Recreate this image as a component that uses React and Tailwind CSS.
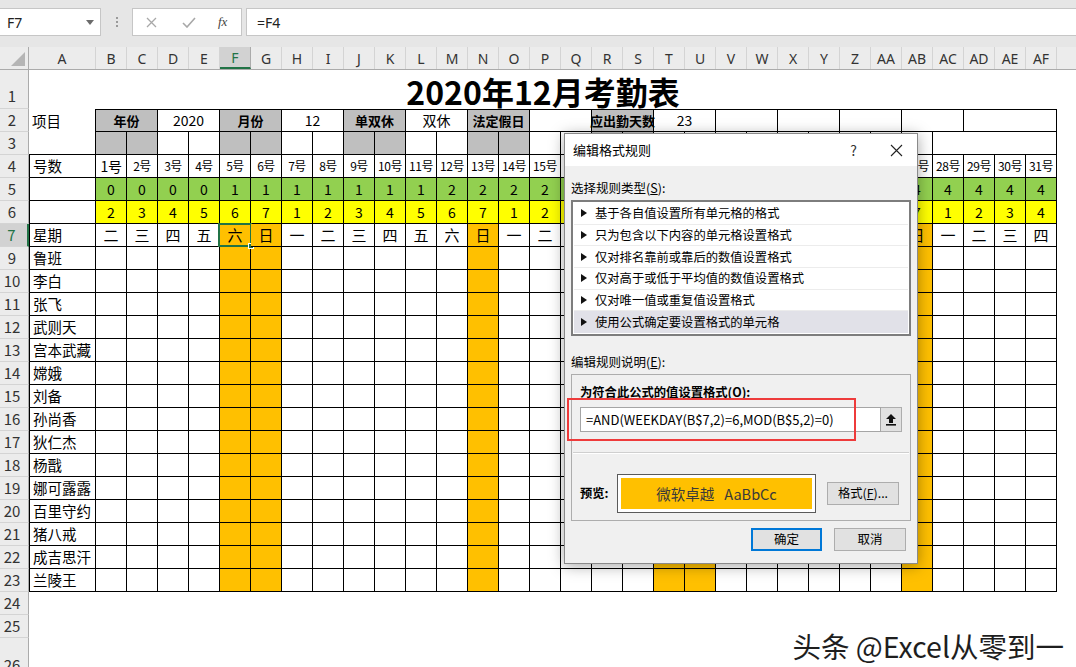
import React from 'react';

const LETTERS = [
  ...'ABCDEFGHIJKLMNOPQRSTUVWXYZ'.split(''),
  'AA', 'AB', 'AC', 'AD', 'AE', 'AF',
];
const days = Array.from({ length: 31 }, (_, i) => i + 1);
const week = (d) => Math.floor((d + 2) / 7);
const weekday = (d) => (d % 7) + 1;
const CN = '一二三四五六日';
const ORANGE = new Set([5, 6, 13, 19, 20, 27]);
const NAMES = ['鲁班', '李白', '张飞', '武则天', '宫本武藏', '嫦娥', '刘备', '孙尚香', '狄仁杰', '杨戬', '娜可露露', '百里守约', '猪八戒', '成吉思汗', '兰陵王'];

// row 2 merged header blocks (B..AF)
const ROW2 = [
  { t: '年份', g: true }, { t: '2020' }, { t: '月份', g: true }, { t: '12' },
  { t: '单双休', g: true }, { t: '双休' }, { t: '法定假日', g: true }, { t: '' },
  { t: '应出勤天数', g: true }, { t: '23' }, { t: '' }, { t: '' }, { t: '' }, { t: '' },
  { t: '', wide: true },
];
const GRAY3 = new Set([1, 2, 5, 6, 9, 10, 13, 14, 17, 18]);

function RowHead({ n, sel, align }) {
  return (
    <div
      className={`w-[29px] shrink-0 flex justify-center pr-[4px] text-[15px] border-b border-b-[#d4d4d4] ${align === 'end' ? 'items-end pb-[1px]' : 'items-center'} ${
        sel
          ? 'bg-[#d2d2d2] text-[#217346] border-r-2 border-r-[#217346]'
          : 'bg-[#ececec] text-[#333] border-r border-r-[#ababab]'
      }`}
    >
      {n}
    </div>
  );
}

const cellBase = 'shrink-0 flex items-center justify-center border-r border-b border-black';

function DayRow({ n, render, aCell }) {
  return (
    <div className="flex h-[23px]">
      <RowHead n={n} sel={n === 7} />
      {aCell}
      {days.map((d) => render(d))}
      <div className="flex-1" />
    </div>
  );
}

function ACell({ text, left = true, bottom = true }) {
  return (
    <div
      className={`w-[67px] shrink-0 flex items-center pl-[3px] text-[14.5px] border-r border-black ${bottom ? 'border-b' : ''} ${left ? 'border-l' : ''}`}
    >
      {text}
    </div>
  );
}

function Tri() {
  return (
    <svg width="6" height="8" viewBox="0 0 6 8" className="shrink-0">
      <path d="M0 0 L6 4 L0 8 Z" fill="#111" />
    </svg>
  );
}

const RULES = [
  '基于各自值设置所有单元格的格式',
  '只为包含以下内容的单元格设置格式',
  '仅对排名靠前或靠后的数值设置格式',
  '仅对高于或低于平均值的数值设置格式',
  '仅对唯一值或重复值设置格式',
  '使用公式确定要设置格式的单元格',
];

function Dialog() {
  return (
    <div className="absolute left-[564px] top-[133px] w-[354px] h-[431px] bg-[#f0f0f0] border border-[#8a8a8a] shadow-[0_2px_14px_rgba(0,0,0,0.35)] text-[12px] text-black">
      <div className="h-[32px] bg-white flex items-center justify-between pl-[8px] pr-[14px]">
        <span className="text-[13px]">编辑格式规则</span>
        <div className="flex items-center gap-[33px]">
          <span className="text-[14px] text-[#333]">?</span>
          <svg width="13" height="13" viewBox="0 0 13 13">
            <path d="M1 1 L12 12 M12 1 L1 12" stroke="#222" strokeWidth="1.1" />
          </svg>
        </div>
      </div>
      <div className="px-[6px]">
        <div className="pt-[13px] leading-[18px] text-[12.5px]">
          选择规则类型(<span className="underline">S</span>):
        </div>
        <div className="mt-[3px] border-2 border-[#7d7d7d] bg-white p-[1px]">
          {RULES.map((r, i) => (
            <div
              key={r}
              className={`h-[21.7px] flex items-center gap-[8px] pl-[7px] text-[12.3px] border-b ${
                i === 5 ? 'bg-[#e1e1e8] border-b-[#e1e1e8]' : 'border-b-[#ececec]'
              }`}
            >
              <Tri />
              <span>{r}</span>
            </div>
          ))}
        </div>
        <div className="mt-[17px] leading-[18px] text-[12.5px]">
          编辑规则说明(<span className="underline">E</span>):
        </div>
        <div className="mt-[3px] h-[147px] border border-[#adadad] pl-[8px] pr-[1px]">
          <div className="pt-[8px] leading-[18px] font-bold text-[12.3px]">
            为符合此公式的值设置格式(<span className="underline">O</span>):
          </div>
          <div className="mt-[6px] flex h-[25px]">
            <div className="w-[301px] bg-white border border-[#a5a5a5] flex items-center pl-[5px] text-[13px]">
              =AND(WEEKDAY(B$7,2)=6,MOD(B$5,2)=0)
            </div>
            <div className="w-[21px] bg-[#e1e1e1] border border-[#adadad] border-l-0 flex items-center justify-center">
              <svg width="12" height="13" viewBox="0 0 12 13">
                <path d="M6 1 L11 6 H8 V10 H4 V6 H1 Z" fill="#111" />
                <rect x="1" y="11" width="10" height="1.6" fill="#111" />
              </svg>
            </div>
          </div>
          <div className="mt-[20px] -ml-[7px] border-t border-t-[#cfcfcf] border-b border-b-white" />
          <div className="mt-[20px] flex items-center">
            <span className="w-[37px] font-bold text-[12.3px]">预览:</span>
            <div className="w-[199px] h-[39px] border border-[#5a5a5a] bg-white p-[3px]">
              <div className="h-full bg-[#ffc000] flex items-center justify-center text-[14.5px] text-[#3a3a3a] gap-[10px]">
                <span>微软卓越</span>
                <span>AaBbCc</span>
              </div>
            </div>
            <div className="ml-[11px] w-[72px] h-[23px] bg-[#e1e1e1] border border-[#adadad] flex items-center justify-center text-[12.3px]">
              格式(<span className="underline">F</span>)...
            </div>
          </div>
        </div>
        <div className="mt-[7px] flex justify-end gap-[12px] mr-[5px]">
          <div className="w-[71px] h-[23px] bg-[#e1e1e1] border-2 border-[#0078d7] flex items-center justify-center text-[12.5px]">
            确定
          </div>
          <div className="w-[72px] h-[23px] bg-[#e1e1e1] border border-[#adadad] flex items-center justify-center text-[12.5px]">
            取消
          </div>
        </div>
      </div>
      {/* red highlight around formula */}
      <div className="absolute left-[2px] top-[264px] w-[289px] h-[43px] border-2 border-[#ee3b3b]" />
    </div>
  );
}

export default function App() {
  return (
    <div className="relative w-[1076px] h-[667px] overflow-hidden bg-white font-['Noto_Sans_CJK_SC','Noto_Sans',sans-serif] text-black">
      {/* formula bar */}
      <div className="h-[47px] bg-[#e6e6e6] flex items-start pt-[8px]">
        <div className="w-[101px] h-[28px] bg-white border border-[#c6c6c6] border-l-0 flex items-center justify-between pl-[7px] pr-[6px]">
          <span className="text-[14px] text-[#222] font-['Noto_Sans',sans-serif]">F7</span>
          <svg width="8" height="5" viewBox="0 0 8 5">
            <path d="M0 0 H8 L4 5 Z" fill="#6b6b6b" />
          </svg>
        </div>
        <div className="w-[31px] h-[28px] flex flex-col items-center justify-center gap-[2px]">
          <span className="w-[2px] h-[2px] bg-[#9a9a9a]" />
          <span className="w-[2px] h-[2px] bg-[#9a9a9a]" />
          <span className="w-[2px] h-[2px] bg-[#9a9a9a]" />
        </div>
        <div className="w-[110px] h-[28px] bg-white border border-[#c6c6c6] flex items-center pl-[13px]">
          <svg width="11" height="11" viewBox="0 0 11 11">
            <path d="M1 1 L10 10 M10 1 L1 10" stroke="#a8a8a8" strokeWidth="1.3" />
          </svg>
          <svg width="14" height="11" viewBox="0 0 14 11" className="ml-[25px]">
            <path d="M1 6 L5 10 L13 1" stroke="#a8a8a8" strokeWidth="1.6" fill="none" />
          </svg>
          <span className="ml-[22px] text-[13px] italic font-['Liberation_Serif',serif] text-[#444]">fx</span>
        </div>
        <div className="ml-[4px] flex-1 h-[28px] bg-white border border-[#c6c6c6] border-r-0 flex items-center pl-[10px]">
          <span className="text-[14px] text-[#222] font-['Noto_Sans',sans-serif]">=F4</span>
        </div>
      </div>

      {/* column headers */}
      <div className="flex h-[23px] bg-[#ececec] border-b border-b-[#ababab] font-['Noto_Sans',sans-serif] text-[14px] text-[#333]">
        <div className="w-[29px] shrink-0 border-r border-r-[#ababab] relative">
          <svg width="14" height="14" viewBox="0 0 14 14" className="absolute right-[3px] bottom-[3px]">
            <path d="M14 0 V14 H0 Z" fill="#b5b5b5" />
          </svg>
        </div>
        {LETTERS.map((l) => (
          <div
            key={l}
            className={`${l === 'A' ? 'w-[67px]' : 'w-[31px]'} shrink-0 flex items-center justify-center ${
              l === 'F'
                ? 'bg-[#d2d2d2] text-[#217346] border-b-2 border-b-[#217346] border-r border-r-[#ababab]'
                : 'border-r border-r-[#d4d4d4]'
            }`}
          >
            {l}
          </div>
        ))}
        <div className="flex-1" />
      </div>

      {/* row 1 title */}
      <div className="flex h-[39px]">
        <RowHead n={1} align="end" />
        <div className="w-[1028px] shrink-0 flex items-end justify-center pb-[2px] text-[32px] font-bold leading-none">
          2020年12月考勤表
        </div>
        <div className="flex-1" />
      </div>

      {/* row 2 */}
      <div className="flex h-[23px]">
        <RowHead n={2} />
        <ACell text="项目" left={false} bottom={false} />
        {ROW2.map((c, i) => (
          <div
            key={i}
            className={`${c.wide ? 'w-[93px]' : 'w-[62px]'} ${cellBase} border-t whitespace-nowrap ${c.g ? 'bg-[#bfbfbf] font-bold text-[13px]' : 'text-[14px]'}`}
          >
            {c.t}
          </div>
        ))}
        <div className="flex-1" />
      </div>

      {/* row 3 */}
      <div className="flex h-[23px]">
        <RowHead n={3} />
        <ACell text="" left={false} />
        {days.slice(0, 27).map((d) => (
          <div key={d} className={`w-[31px] ${cellBase} ${GRAY3.has(d) ? 'bg-[#bfbfbf]' : ''}`} />
        ))}
        <div className={`w-[124px] ${cellBase}`} />
        <div className="flex-1" />
      </div>

      {/* row 4 */}
      <DayRow
        n={4}
        aCell={<ACell text="号数" />}
        render={(d) => (
          <div key={d} className={`w-[31px] ${cellBase} tracking-[-0.5px] ${d === 1 ? 'text-[14px]' : 'text-[12px]'}`}>
            {d}号
          </div>
        )}
      />
      {/* row 5 */}
      <DayRow
        n={5}
        aCell={<ACell text="" />}
        render={(d) => (
          <div key={d} className={`w-[31px] ${cellBase} bg-[#92d050] text-[14px]`}>
            {week(d)}
          </div>
        )}
      />
      {/* row 6 */}
      <DayRow
        n={6}
        aCell={<ACell text="" />}
        render={(d) => (
          <div key={d} className={`w-[31px] ${cellBase} bg-[#ffff00] text-[14px]`}>
            {weekday(d)}
          </div>
        )}
      />
      {/* row 7 */}
      <DayRow
        n={7}
        aCell={<ACell text="星期" />}
        render={(d) => (
          <div key={d} className={`relative w-[31px] ${cellBase} text-[15px] ${ORANGE.has(d) ? 'bg-[#ffc000]' : ''}`}>
            {CN[weekday(d) - 1]}
            {d === 5 && (
              <div className="absolute -left-[2px] -top-[1px] w-[34px] h-[24px] border-2 border-[#217346]">
                <div className="absolute -right-[4px] -bottom-[4px] w-[6px] h-[6px] bg-[#217346] border border-white" />
              </div>
            )}
          </div>
        )}
      />

      {/* name rows */}
      {NAMES.map((name, i) => (
        <DayRow
          key={name}
          n={i + 9}
          aCell={<ACell text={name} />}
          render={(d) => (
            <div key={d} className={`w-[31px] ${cellBase} ${ORANGE.has(d) ? 'bg-[#ffc000]' : ''}`} />
          )}
        />
      ))}

      {/* empty rows */}
      <div className="flex h-[23px]">
        <RowHead n={24} />
      </div>
      <div className="flex h-[23px]">
        <RowHead n={25} />
      </div>
      <div className="flex h-[40px]">
        <RowHead n={26} align="end" />
      </div>

      <Dialog />

      <div className="absolute right-[12px] top-[627px] text-[28.5px] leading-[38px] text-[#1e1e1e] font-['Noto_Sans_CJK_SC',sans-serif] [text-shadow:0_0_2px_#fff,0_0_2px_#fff]">
        头条 @Excel从零到一
      </div>
    </div>
  );
}
